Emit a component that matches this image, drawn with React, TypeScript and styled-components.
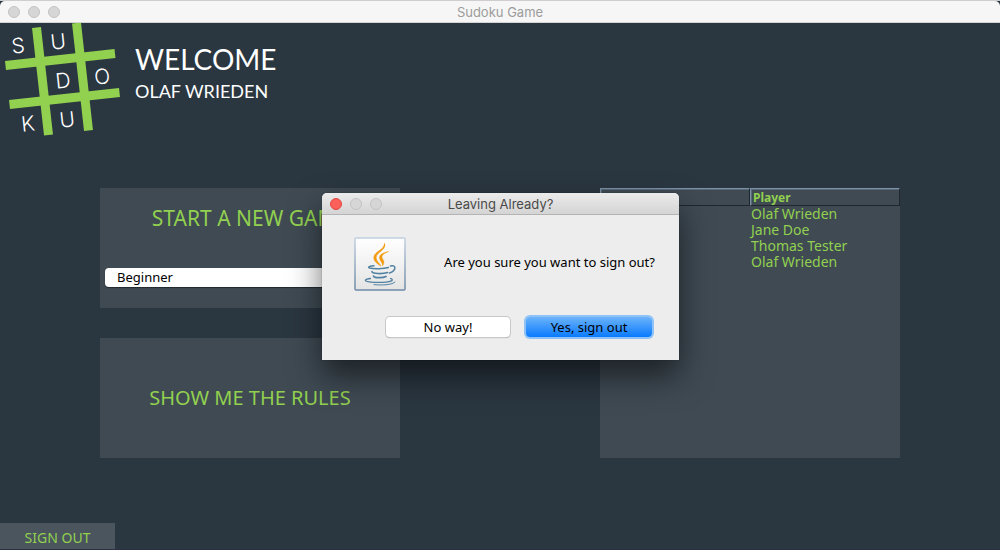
import React from "react";
import styled, { createGlobalStyle } from "styled-components";

const GlobalStyle = createGlobalStyle`
  * { box-sizing: border-box; }
  body { margin: 0; background: #cfcdcf; }
  button, select { font: inherit; border: 0; padding: 0; margin: 0; cursor: pointer; }
`;

const lime = "#92d050";

const Window = styled.div`
  position: relative;
  display: flex;
  flex-direction: column;
  min-height: 100vh;
  overflow: hidden;
  background: #2a3640;
  color: ${lime};
  font-family: "Noto Sans", "Open Sans", sans-serif;
  border-top: 1px solid #cfcdcf;
  border-bottom: 1px solid #2b3142;
`;

const TitleBar = styled.header<{ $dialog?: boolean }>`
  display: grid;
  grid-template-columns: 1fr auto 1fr;
  align-items: center;
  height: 22px;
  padding: 0 8px;
  font-family: Inter, sans-serif;
  font-size: 13px;
  line-height: 20px;
  color: ${(p) => (p.$dialog ? "#4a4a4a" : "#9c9c9c")};
  background: ${(p) => (p.$dialog ? "linear-gradient(#ebebeb, #d4d4d4)" : "#f6f6f6")};
  border-bottom: 1px solid ${(p) => (p.$dialog ? "#b4b4b4" : "#d4d4d4")};
  border-radius: 5px 5px 0 0;
`;

const TitleText = styled.h2`
  margin: 0;
  font: inherit;
`;

const Lights = styled.div`
  display: flex;
  gap: 8px;
`;

const Light = styled.button<{ $close?: boolean }>`
  width: 12px;
  height: 12px;
  border-radius: 50%;
  border: 1px solid ${(p) => (p.$close ? "#e2463f" : "#c4c4c4")};
  background: ${(p) => (p.$close ? "#fc605b" : "#d6d6d6")};
`;

const Banner = styled.div`
  display: flex;
  gap: 15px;
  height: 165px;
`;

const Logo = styled.svg`
  width: 120px;
  height: 120px;
  font-family: Inter, sans-serif;
  font-weight: 300;
  font-size: 21px;
`;

const Greeting = styled.div`
  padding-top: 18px;
  font-family: Lato, sans-serif;
  color: #fff;
`;

const Welcome = styled.h1`
  margin: 0;
  font-size: 28px;
  font-weight: 400;
  line-height: 36px;
`;

const UserName = styled.p`
  margin: 0;
  font-size: 18px;
  line-height: 28px;
`;

const Content = styled.main`
  display: grid;
  grid-template-columns: 3fr 3fr;
  column-gap: 25%;
  padding: 0 10%;
`;

const Menu = styled.div`
  display: grid;
  gap: 30px;
`;

const Panel = styled.section`
  display: flex;
  flex-direction: column;
  height: 120px;
  background: #3f4a53;
`;

const MenuButton = styled.button`
  flex: 1;
  background: none;
  color: ${lime};
  font-size: 20px;
  line-height: 28px;
`;

const LevelSelect = styled.select`
  appearance: none;
  height: 19px;
  margin: 0 5px 21px;
  padding: 0 12px;
  border-radius: 4px;
  background: #fff;
  box-shadow: 0 1px 1px #20282f;
  color: #000;
  font-size: 13px;
  line-height: 19px;
`;

const StartButton = styled(MenuButton)`
  padding-bottom: 20px;
  font-size: 21px;
`;

const ScorePanel = styled.section`
  background: #3f4a53;
`;

const ScoreTable = styled.table`
  width: 100%;
  table-layout: fixed;
  border-collapse: separate;
  border-spacing: 0;
  font-size: 14px;
  line-height: 16px;
`;

const ColumnHead = styled.th`
  height: 18px;
  padding: 0 2px;
  text-align: left;
  font-size: 12px;
  line-height: 15px;
  border: 1px solid;
  border-color: #7b92a5 #20262c #20262c #7b92a5;
  box-shadow: inset 1px 1px #59697a;
`;

const Cell = styled.td`
  height: 16px;
  padding: 0 1px;
`;

const Footer = styled.footer`
  margin-top: auto;
`;

const SignOut = styled.button`
  display: block;
  width: 115px;
  height: 26px;
  padding-top: 3px;
  background: #4a555e;
  color: ${lime};
  font-size: 14px;
  line-height: 23px;
`;

const Overlay = styled.div`
  position: absolute;
  inset: 0;
  display: flex;
  justify-content: center;
  align-items: flex-start;
  padding: 192px 0 0 1px;
`;

const Dialog = styled.section`
  width: 357px;
  border-radius: 5px 5px 0 0;
  background: #ededed;
  color: #000;
  font-size: 13px;
  box-shadow: 0 0 1px rgba(0, 0, 0, 0.6), 0 16px 32px rgba(0, 0, 0, 0.55);
`;

const Message = styled.div`
  display: flex;
  align-items: center;
  gap: 34px;
  padding: 22px 20px 0 32px;
`;

const Question = styled.p`
  flex: 1;
  margin: 0;
  padding-bottom: 4px;
  text-align: center;
  line-height: 20px;
`;

const Actions = styled.div`
  display: flex;
  justify-content: flex-end;
  gap: 16px;
  padding: 26px 27px 23px;
`;

const ActionButton = styled.button<{ $primary?: boolean }>`
  width: ${(p) => (p.$primary ? "126px" : "124px")};
  height: 20px;
  line-height: 20px;
  border-radius: 4px;
  color: #000;
  background: ${(p) => (p.$primary ? "linear-gradient(#6bb3fa, #0a7bff)" : "#fff")};
  box-shadow: ${(p) => (p.$primary ? "0 0 0 2px #8fc2f7" : "0 0 0 1px #c8c8c8, 0 1px 1px #999")};
`;

const letters: [string, number, number][] = [
  ["S", 18, 30],
  ["U", 58, 26],
  ["D", 63, 65],
  ["O", 102, 61],
  ["K", 28, 108],
  ["U", 67, 104],
];

const SudokuLogo = () => (
  <Logo viewBox="0 0 120 120" role="img" aria-label="Sudoku">
    <g stroke={lime} strokeWidth="9">
      <path d="M36.5 4.5 L48.5 112" />
      <path d="M76.5 0 L88.5 107.5" />
      <path d="M5.5 42.5 L115 30.5" />
      <path d="M9.5 81.5 L119.5 69.5" />
    </g>
    <g fill="#fff" textAnchor="middle">
      {letters.map(([letter, x, y], i) => (
        <text key={i} x={x} y={y} transform={`rotate(-6 ${x} ${y - 8})`}>
          {letter}
        </text>
      ))}
    </g>
  </Logo>
);

const JavaIcon = () => (
  <svg width="52" height="54" viewBox="0 0 52 54" aria-hidden="true">
    <defs>
      <linearGradient id="tile" x2="0" y2="1">
        <stop offset="0" stopColor="#fff" />
        <stop offset="1" stopColor="#e4e4e4" />
      </linearGradient>
      <linearGradient id="edge" x2="0" y2="1">
        <stop offset="0" stopColor="#c0d0e0" />
        <stop offset="1" stopColor="#6d8aa6" />
      </linearGradient>
    </defs>
    <rect x="1" y="1" width="50" height="52" rx="1" fill="url(#tile)" stroke="url(#edge)" strokeWidth="1.5" />
    <g fill="#f29a0c">
      <path d="M30.5 6.5 C32.5 13 22 15.5 22 20.5 C22 24 25 26 27 29 C23 26.5 19.5 24 20 20 C20.5 14.5 31 12.5 30.5 6.5Z" stroke="#f29a0c" strokeWidth=".8" />
      <path d="M34.5 14.5 C30 16.5 28 18 28 20 C28 22.5 32 24 28.5 29 C29 25.5 25.5 24 25.5 20.5 C25.5 17 30 15.5 34.5 14.5Z" stroke="#f29a0c" strokeWidth=".4" />
    </g>
    <g fill="none" stroke="#5382a1" strokeLinecap="round">
      <path d="M20 28.8 C16 29 13 30 15.5 31 C20 32.2 30 31.8 34.5 30.5" strokeWidth="1.5" />
      <path d="M36.5 29 C43 27.5 42 34 35.5 36" strokeWidth="1.5" />
      <path d="M18 34.5 C18 37 29 37 33.5 35.5" strokeWidth="1.7" />
      <path d="M19.5 39 C20 41.2 29 41.2 32 39.5" strokeWidth="1.7" />
      <path d="M16.5 41.5 C11 42 9 44 15 44.8 C23 46 36 45.5 38 43.5 C39 42.5 37.5 42 36.5 41.5" strokeWidth="1.3" />
      <path d="M20 47.6 C29 48.5 38.5 47.8 41 45" strokeWidth="1" />
    </g>
  </svg>
);

const WindowLights = ({ closable }: { closable?: boolean }) => (
  <Lights>
    <Light $close={closable} aria-label="Close" />
    <Light aria-label="Minimize" />
    <Light aria-label="Zoom" />
  </Lights>
);

const players = ["Olaf Wrieden", "Jane Doe", "Thomas Tester", "Olaf Wrieden"];

export default function App() {
  return (
    <>
      <GlobalStyle />
      <Window>
        <TitleBar>
          <WindowLights />
          <TitleText>Sudoku Game</TitleText>
        </TitleBar>
        <Banner>
          <SudokuLogo />
          <Greeting>
            <Welcome>WELCOME</Welcome>
            <UserName>OLAF WRIEDEN</UserName>
          </Greeting>
        </Banner>
        <Content>
          <Menu>
            <Panel>
              <StartButton>START A NEW GAME</StartButton>
              <LevelSelect aria-label="Level" defaultValue="Beginner">
                <option>Beginner</option>
              </LevelSelect>
            </Panel>
            <Panel>
              <MenuButton>SHOW ME THE RULES</MenuButton>
            </Panel>
          </Menu>
          <ScorePanel>
            <ScoreTable>
              <thead>
                <tr>
                  <ColumnHead>Score</ColumnHead>
                  <ColumnHead>Player</ColumnHead>
                </tr>
              </thead>
              <tbody>
                {players.map((player, i) => (
                  <tr key={i}>
                    <Cell />
                    <Cell>{player}</Cell>
                  </tr>
                ))}
              </tbody>
            </ScoreTable>
          </ScorePanel>
        </Content>
        <Footer>
          <SignOut>SIGN OUT</SignOut>
        </Footer>
        <Overlay>
          <Dialog role="dialog" aria-labelledby="dialog-title">
            <TitleBar $dialog>
              <WindowLights closable />
              <TitleText id="dialog-title">Leaving Already?</TitleText>
            </TitleBar>
            <Message>
              <JavaIcon />
              <Question>Are you sure you want to sign out?</Question>
            </Message>
            <Actions>
              <ActionButton>No way!</ActionButton>
              <ActionButton $primary>Yes, sign out</ActionButton>
            </Actions>
          </Dialog>
        </Overlay>
      </Window>
    </>
  );
}
